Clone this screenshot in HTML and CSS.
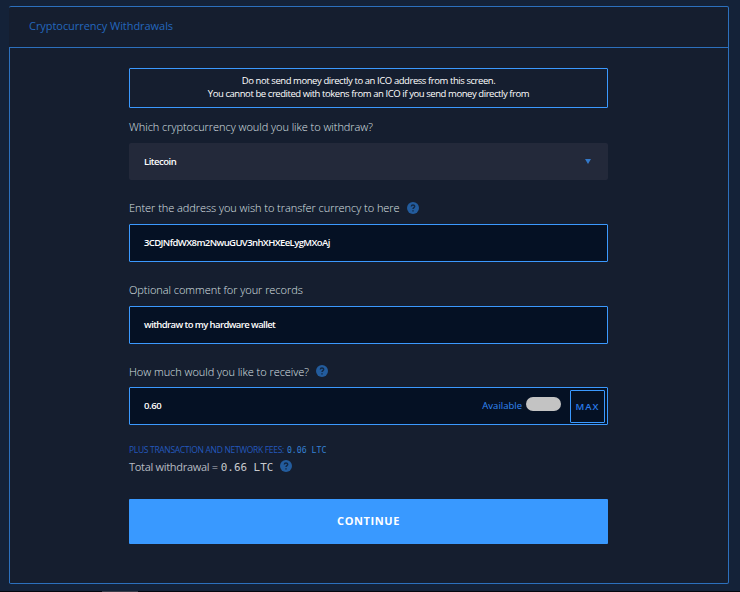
FILE: index.html
```html
<!DOCTYPE html>
<html lang="en">
<head>
<meta charset="utf-8">
<title>Cryptocurrency Withdrawals</title>
<link rel="stylesheet" href="styles.css">
</head>
<body>
<main class="panel">
  <header class="panel-header"><h1>Cryptocurrency Withdrawals</h1></header>
  <form class="form">
    <div class="notice">
      <p>Do not send money directly to an ICO address from this screen.</p>
      <p>You cannot be credited with tokens from an ICO if you send money directly from</p>
    </div>
    <div class="label label-currency"><span>Which cryptocurrency would you like to withdraw?</span></div>
    <div class="select"><span>Litecoin</span>
      <svg class="caret" viewBox="0 0 6 5"><path d="M0 0h6L3 5z"/></svg>
    </div>
    <div class="label label-address"><span>Enter the address you wish to transfer currency to here</span>
      <svg class="help" viewBox="0 0 12 12"><circle cx="6" cy="6" r="6"/><path d="M4.3 4.6C4.3 2.5 7.7 2.5 7.7 4.5C7.7 5.6 6 5.7 6 7.1M6 8.3v1.2"/></svg>
    </div>
    <div class="input"><span>3CDJNfdWX8m2NwuGUV3nhXHXEeLygMXoAj</span></div>
    <div class="label label-comment"><span>Optional comment for your records</span></div>
    <div class="input"><span>withdraw to my hardware wallet</span></div>
    <div class="label label-amount"><span>How much would you like to receive?</span>
      <svg class="help" viewBox="0 0 12 12"><circle cx="6" cy="6" r="6"/><path d="M4.3 4.6C4.3 2.5 7.7 2.5 7.7 4.5C7.7 5.6 6 5.7 6 7.1M6 8.3v1.2"/></svg>
    </div>
    <div class="input amount"><span class="value">0.60</span>
      <span class="available">Available</span><i class="redacted"></i><b class="max">MAX</b>
    </div>
    <div class="fees"><span>PLUS TRANSACTION AND NETWORK FEES:</span><b>0.06 LTC</b></div>
    <div class="total"><span>Total withdrawal =</span><b>0.66 LTC</b>
      <svg class="help" viewBox="0 0 12 12"><circle cx="6" cy="6" r="6"/><path d="M4.3 4.6C4.3 2.5 7.7 2.5 7.7 4.5C7.7 5.6 6 5.7 6 7.1M6 8.3v1.2"/></svg>
    </div>
    <button class="continue" type="button">CONTINUE</button>
  </form>
</main>
<footer class="strip"><i></i></footer>
</body>
</html>
```
FILE: styles.css
```css
* { box-sizing: border-box; }
body {
  margin: 0;
  height: 592px;
  overflow: hidden;
  padding-top: 6px;
  background: #142238;
  font-family: "Open Sans", "Liberation Sans", sans-serif;
  font-size: 11px;
  color: #fff;
  white-space: nowrap;
}
.panel {
  width: 720px;
  height: 578px;
  margin-left: 9px;
  background: #151e2f;
  border: 1px solid #2c70bd;
  border-left: 0;
  border-radius: 2px;
}
.panel-header {
  height: 41px;
  padding: 0 0 2px 20px;
  display: flex;
  align-items: center;
  border-bottom: 1px solid #2c70bd;
}
h1 {
  margin: 0;
  font-size: 11px;
  font-weight: 400;
  line-height: 16px;
  color: #2467bd;
  letter-spacing: -0.05px;
}
.form {
  height: 535px;
  border-left: 1px solid #2c70bd;
  padding: 20px 120px 0 119px;
  display: flex;
  flex-direction: column;
}
.notice {
  height: 40px;
  border: 1px solid #3b99fe;
  border-radius: 1px;
  padding-top: 5px;
  text-align: center;
}
.notice p { margin: 0; font-size: 9.5px; line-height: 13px; letter-spacing: -0.45px; word-spacing: 0.1px; }
.label {
  display: flex;
  align-items: center;
  gap: 7px;
  font-weight: 300;
  color: #dde0e4;
  letter-spacing: -0.05px;
}
.label span { margin-top: -2px; }
.label-currency { height: 35px; padding-top: 3px; }
.label-address { height: 44px; padding-top: 12px; }
.label-comment { height: 44px; padding-top: 12px; }
.label-amount { height: 43px; padding-top: 11px; }
.label-amount span { margin-top: 0; }
.select {
  height: 37px;
  padding: 0 17px 0 15px;
  border-radius: 2px;
  background: #23293a;
  display: flex;
  align-items: center;
  justify-content: space-between;
  font-size: 9.5px;
  font-weight: 600;
  letter-spacing: -0.5px;
}
.caret { width: 6px; height: 5px; fill: #3379c9; }
.help { width: 12px; height: 12px; flex: none; }
.help circle { fill: #235c9d; }
.help path { fill: none; stroke: #132844; stroke-width: 1.4; }
.input {
  height: 38px;
  padding: 0 14px;
  border: 1px solid #3b99fe;
  border-radius: 1px;
  background: #051124;
  display: flex;
  align-items: center;
  font-size: 9.5px;
  font-weight: 600;
  letter-spacing: -0.6px;
}
.input span { margin-top: -2px; }
.amount { padding-right: 2px; }
.amount .value { letter-spacing: -0.4px; }
.input .available {
  margin-left: auto;
  color: #3387f5;
  font-weight: 400;
  letter-spacing: 0;
}
.redacted { width: 35px; height: 14px; margin: -4px 9px 0 4px; border-radius: 7px; background: #c3c3c3; }
.max {
  width: 35px;
  height: 33px;
  border: 1px solid #3b99fe;
  border-radius: 1px;
  color: #297be9;
  font-size: 9.5px;
  font-weight: 600;
  letter-spacing: 1px;
  line-height: 32px;
  text-align: center;
}
.fees, .total { display: flex; align-items: center; }
.fees { margin-top: 18px; height: 14px; font-size: 8.5px; color: #2458bd; gap: 3px; letter-spacing: -0.32px; }
.fees span { margin-top: -1px; }
.fees b, .total b { font-family: "DejaVu Sans Mono", monospace; font-weight: 400; letter-spacing: 0; }
.fees b { color: #3480d3; font-size: 8.2px; }
.total { height: 19px; color: #b6bac1; gap: 3px; padding-bottom: 1px; }
.total span { letter-spacing: -0.3px; }
.total b { color: #c7c9cd; font-size: 10.9px; padding-top: 2px; }
.total .help { margin-left: 4px; }
.continue {
  height: 45px;
  margin-top: 23px;
  padding: 0 0 2px;
  border: 0;
  border-radius: 1px;
  background: #3999ff;
  color: #fff;
  font: 700 11px "Open Sans", sans-serif;
  letter-spacing: 0.6px;
}
.strip { height: 1px; margin-top: 7px; background: #05070f; }
.strip i { display: block; width: 36px; height: 1px; margin-left: 102px; background: #3b3d49; }
```
